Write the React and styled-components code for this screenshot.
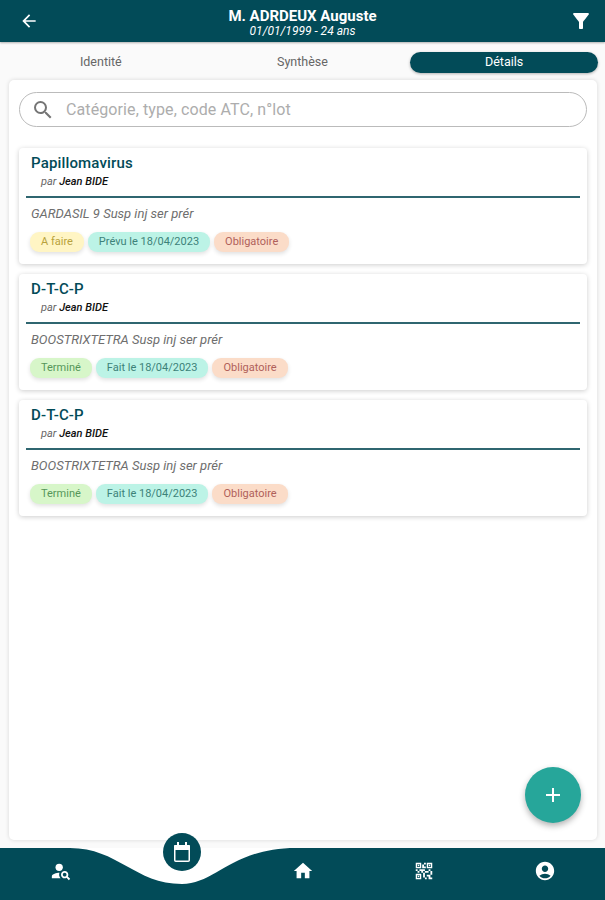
import React from 'react';
import styled, { createGlobalStyle } from 'styled-components';
import {
  MdArrowBack,
  MdFilterAlt,
  MdSearch,
  MdAdd,
  MdHome,
  MdQrCode2,
  MdAccountCircle,
  MdPersonSearch,
} from 'react-icons/md';

const DARK = '#024b58';

const GlobalStyle = createGlobalStyle`
  html, body {
    margin: 0;
    padding: 0;
    background: #fafafa;
    font-family: Roboto, "Liberation Sans", sans-serif;
  }
`;

const Page = styled.div`
  display: flex;
  flex-direction: column;
  width: 605px;
  height: 900px;
  overflow: hidden;
  position: relative;
`;

const Header = styled.header`
  display: grid;
  grid-template-columns: 1fr auto 1fr;
  align-items: center;
  height: 42px;
  padding: 0 12px;
  flex: none;
  background: ${DARK};
  color: #fff;
  box-shadow: 0 1px 2px rgba(0, 0, 0, 0.3);
`;

const HeaderIcon = styled.span`
  display: flex;
  justify-content: center;
  width: 24px;
  margin-left: ${({ $end }) => ($end ? '0' : '5px')};
  justify-self: ${({ $end }) => ($end ? 'end' : 'start')};
  font-size: ${({ $size }) => $size}px;
`;

const Patient = styled.div`
  text-align: center;
`;

const PatientName = styled.div`
  font-size: 15px;
  font-weight: 700;
  line-height: 18px;
  margin-top: 2px;
`;

const PatientBirth = styled.div`
  font-size: 12px;
  font-style: italic;
  line-height: 13px;
`;

const Tabs = styled.nav`
  display: grid;
  grid-template-columns: repeat(3, 1fr);
  height: 38px;
  flex: none;
  padding-top: 10px;
  box-sizing: border-box;
`;

const Tab = styled.div`
  height: 21px;
  line-height: 19px;
  margin: 0 7px;
  font-size: 12.5px;
  text-align: center;
  border-radius: 11px;
  color: ${({ $active }) => ($active ? '#fff' : '#666')};
  background: ${({ $active }) => ($active ? DARK : 'transparent')};
  box-shadow: ${({ $active }) => ($active ? '0 1px 3px rgba(0,0,0,.3)' : 'none')};
`;

const Panel = styled.main`
  flex: 1;
  margin: 0 8px 8px 9px;
  padding: 12px 10px 0;
  background: #fff;
  border-radius: 5px;
  box-shadow: 0 0 4px rgba(0, 0, 0, 0.14);
`;

const SearchBox = styled.div`
  display: flex;
  align-items: center;
  gap: 11px;
  height: 35px;
  margin-bottom: 21px;
  padding: 0 11px;
  box-sizing: border-box;
  border: 1px solid #bbb;
  border-radius: 18px;
  color: #757575;
  font-size: 24px;
`;

const SearchText = styled.span`
  font-size: 16px;
  letter-spacing: 0.1px;
  color: #adadad;
`;

const CardList = styled.div`
  display: flex;
  flex-direction: column;
  gap: 10px;
`;

const Card = styled.article`
  height: 116px;
  box-sizing: border-box;
  padding: 5px 7px 0;
  background: #fff;
  border-radius: 4px;
  box-shadow: 0 1px 5px rgba(0, 0, 0, 0.2);
`;

const CardTitle = styled.h3`
  margin: 0;
  padding-left: 5px;
  font-size: 15px;
  font-weight: 500;
  letter-spacing: 0.15px;
  line-height: 20px;
  color: ${DARK};
`;

const Author = styled.div`
  padding: 1px 0 6px 15px;
  font-size: 11px;
  line-height: 16px;
  font-style: italic;
  color: #666;

  b {
    font-weight: 500;
    color: #111;
  }
`;

const Divider = styled.hr`
  margin: 0 0 8px;
  border: 0;
  border-top: 2px solid #2f6670;
`;

const Product = styled.div`
  padding-left: 5px;
  font-size: 13px;
  font-style: italic;
  line-height: 16px;
  color: #6e6e6e;
`;

const Chips = styled.div`
  display: flex;
  gap: 4px;
  margin: 10px 0 0 4px;
`;

const chipColors = {
  yellow: ['#fff5c4', '#b8a23c'],
  teal: ['#bcf3e6', '#3d8279'],
  orange: ['#fbdcc8', '#b0605a'],
  green: ['#d7f6c9', '#55965a'],
};

const Chip = styled.span`
  height: 20px;
  line-height: 19px;
  padding: 0 11px;
  font-size: 11px;
  border-radius: 9px;
  background: ${({ $tone }) => chipColors[$tone][0]};
  color: ${({ $tone }) => chipColors[$tone][1]};
  box-shadow: 0 2px 4px rgba(0, 0, 0, 0.12);
`;

const Fab = styled.button`
  position: absolute;
  left: 525px;
  top: 767px;
  width: 56px;
  height: 56px;
  display: flex;
  align-items: center;
  justify-content: center;
  padding: 0;
  border: 0;
  border-radius: 50%;
  background: #26a69a;
  color: #fff;
  font-size: 24px;
  box-shadow: 0 3px 6px rgba(0, 0, 0, 0.3);
`;

const BottomBar = styled.footer`
  position: relative;
  display: grid;
  grid-template-columns: repeat(5, 1fr);
  height: 52px;
  flex: none;
  background: ${DARK};
  color: #fff;
  font-size: 22px;
`;

const Notch = styled.svg`
  position: absolute;
  left: 0;
  top: 0;
`;

const NavItem = styled.div`
  position: relative;
  display: flex;
  justify-content: center;
  padding-top: 12px;
`;

const CalendarButton = styled.div`
  position: absolute;
  top: -15px;
  left: 50%;
  margin-left: -19px;
  width: 38px;
  height: 38px;
  display: flex;
  align-items: center;
  justify-content: center;
  border-radius: 50%;
  background: ${DARK};
`;

const CalendarIcon = () => (
  <svg width="20" height="22" viewBox="0 0 20 22" fill="#fff">
    <rect x="5" y="1" width="2" height="4" />
    <rect x="13" y="1" width="2" height="4" />
    <rect x="2" y="4" width="16" height="5" rx="1" />
    <rect x="2.75" y="4.75" width="14.5" height="15.5" rx="1" fill="none" stroke="#fff" strokeWidth="1.5" />
  </svg>
);

const vaccines = [
  {
    title: 'Papillomavirus',
    product: 'GARDASIL 9 Susp inj ser prér',
    chips: [['yellow', 'A faire'], ['teal', 'Prévu le 18/04/2023'], ['orange', 'Obligatoire']],
  },
  {
    title: 'D-T-C-P',
    product: 'BOOSTRIXTETRA Susp inj ser prér',
    chips: [['green', 'Terminé'], ['teal', 'Fait le 18/04/2023'], ['orange', 'Obligatoire']],
  },
  {
    title: 'D-T-C-P',
    product: 'BOOSTRIXTETRA Susp inj ser prér',
    chips: [['green', 'Terminé'], ['teal', 'Fait le 18/04/2023'], ['orange', 'Obligatoire']],
  },
];

export default function App() {
  return (
    <Page>
      <GlobalStyle />
      <Header>
        <HeaderIcon $size={20}><MdArrowBack /></HeaderIcon>
        <Patient>
          <PatientName>M. ADRDEUX Auguste</PatientName>
          <PatientBirth>01/01/1999 - 24 ans</PatientBirth>
        </Patient>
        <HeaderIcon $end $size={24}><MdFilterAlt /></HeaderIcon>
      </Header>

      <Tabs>
        <Tab>Identité</Tab>
        <Tab>Synthèse</Tab>
        <Tab $active>Détails</Tab>
      </Tabs>

      <Panel>
        <SearchBox>
          <MdSearch />
          <SearchText>Catégorie, type, code ATC, n°lot</SearchText>
        </SearchBox>
        <CardList>
          {vaccines.map((v, i) => (
            <Card key={i}>
              <CardTitle>{v.title}</CardTitle>
              <Author>par <b>Jean BIDE</b></Author>
              <Divider />
              <Product>{v.product}</Product>
              <Chips>
                {v.chips.map(([tone, label]) => (
                  <Chip key={label} $tone={tone}>{label}</Chip>
                ))}
              </Chips>
            </Card>
          ))}
        </CardList>
      </Panel>

      <Fab><MdAdd /></Fab>

      <BottomBar>
        <Notch width="605" height="37" viewBox="0 0 605 37">
          <path
            d="M70 0 C118 0 135 36 182 36 C216 36 232 0 296 0 Z"
            fill="#fff"
          />
        </Notch>
        <NavItem><MdPersonSearch /></NavItem>
        <NavItem>
          <CalendarButton><CalendarIcon /></CalendarButton>
        </NavItem>
        <NavItem><MdHome /></NavItem>
        <NavItem><MdQrCode2 /></NavItem>
        <NavItem><MdAccountCircle /></NavItem>
      </BottomBar>
    </Page>
  );
}
